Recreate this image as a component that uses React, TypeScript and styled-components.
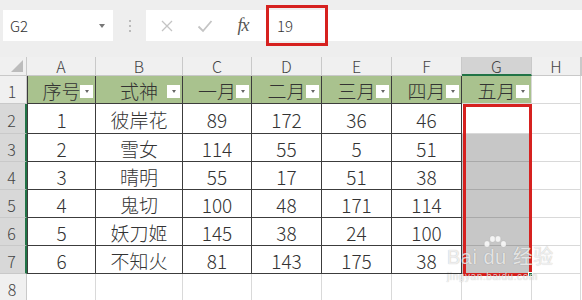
import { Fragment } from 'react'
import styled, { createGlobalStyle, css } from 'styled-components'

const GlobalStyle = createGlobalStyle`
  html, body {
    margin: 0;
    padding: 0;
    background: #fff;
    overflow: hidden;
  }
  * {
    box-sizing: border-box;
  }
`

const FONT = `"Noto Sans CJK SC", "Noto Sans", sans-serif`
const GREEN = '#a9c28e'
const DARK = '#3c3c3c'
const LIGHT = '#d9d9d9'
const HEAD_LINE = '#c9c9c9'
const RED = '#d6211f'
const EXCEL = '#217346'

const headers = ['序号', '式神', '一月', '二月', '三月', '四月', '五月']
const letters = ['A', 'B', 'C', 'D', 'E', 'F', 'G', 'H']
const rows: (string | number)[][] = [
  [1, '彼岸花', 89, 172, 36, 46],
  [2, '雪女', 114, 55, 5, 51],
  [3, '晴明', 55, 17, 51, 38],
  [4, '鬼切', 100, 48, 171, 114],
  [5, '妖刀姬', 145, 38, 24, 100],
  [6, '不知火', 81, 143, 175, 38],
]

const Page = styled.div`
  width: 582px;
  height: 300px;
  overflow: hidden;
  font-family: ${FONT};
  color: #333;
`

const Toolbar = styled.div`
  display: flex;
  align-items: flex-start;
  height: 57px;
  padding: 10px 0 0 3px;
  background: #eeeeee;
`

const NameBox = styled.div`
  width: 110px;
  height: 31px;
  background: #fff;
  display: flex;
  align-items: center;
  justify-content: space-between;
  padding: 0 8px 0 7px;
  font-size: 15px;
  font-weight: 300;
  color: #333;
`

const Caret = styled.span`
  width: 0;
  height: 0;
  border-left: 3px solid transparent;
  border-right: 3px solid transparent;
  border-top: 4px solid #777;
`

const Grip = styled.div`
  width: 33px;
  height: 31px;
  display: flex;
  align-items: center;
  justify-content: center;
`

const FormulaBar = styled.div`
  flex: 1;
  height: 31px;
  background: #fff;
  display: flex;
  align-items: center;
  padding-left: 2px;
`

const IconButton = styled.div`
  width: 38px;
  height: 31px;
  display: flex;
  align-items: center;
  justify-content: center;
`

const FxLabel = styled.span`
  font-family: 'Liberation Serif', serif;
  font-style: italic;
  font-size: 18px;
  color: #555;
  letter-spacing: -1px;
`

const ValueBox = styled.div`
  align-self: center;
  margin-left: 4px;
  width: 62px;
  height: 41px;
  border: 3px solid ${RED};
  display: flex;
  align-items: center;
  padding-left: 8px;
  font-size: 15px;
  font-weight: 300;
  color: #333;
`

const Sheet = styled.div`
  position: relative;
  display: grid;
  grid-template-columns: 27px 69px 87px 69px 70px 70px 70px 70px 1fr;
  grid-template-rows: 19px 28px 30px 28px 28px 28px 28px 28px 1fr;
  height: 243px;
`

type Place = { $col: number; $row: number | string }

const placed = css<Place>`
  grid-column: ${(p) => p.$col};
  grid-row: ${(p) => p.$row};
`

const Corner = styled.div<Place>`
  ${placed};
  background: #f0f0f0;
  border-right: 1px solid ${HEAD_LINE};
  border-bottom: 1px solid ${HEAD_LINE};
  display: flex;
  align-items: flex-end;
  justify-content: flex-end;
  padding: 0 3px 3px 0;
`

const ColHead = styled.div<Place & { $active?: boolean }>`
  ${placed};
  display: flex;
  align-items: center;
  justify-content: center;
  font-size: 16px;
  font-weight: 300;
  color: #444;
  background: ${(p) => (p.$active ? '#d3d3d3' : '#f0f0f0')};
  border-right: 1px solid ${HEAD_LINE};
  border-bottom: ${(p) => (p.$active ? `2px solid ${EXCEL}` : `1px solid ${HEAD_LINE}`)};
`

const RowHead = styled.div<Place & { $active?: boolean }>`
  ${placed};
  display: flex;
  align-items: center;
  justify-content: center;
  padding: 3px 2px 0 0;
  font-size: 16px;
  font-weight: 300;
  color: #444;
  background: ${(p) => (p.$active ? '#d8d8d8' : '#f0f0f0')};
  border-bottom: 1px solid ${HEAD_LINE};
  border-right: ${(p) => (p.$active ? `2px solid ${EXCEL}` : `1px solid ${HEAD_LINE}`)};
`

type Tone = 'green' | 'white' | 'gray' | 'empty'

const toneBg: Record<Tone, string> = {
  green: GREEN,
  white: '#fff',
  gray: '#c7c7c7',
  empty: '#fff',
}

const Cell = styled.div<Place & { $tone: Tone; $table?: boolean; $edge?: boolean }>`
  ${placed};
  position: relative;
  display: flex;
  align-items: center;
  justify-content: center;
  padding-top: 2px;
  font-size: 19px;
  font-weight: 300;
  line-height: 1;
  color: #333;
  background: ${(p) => toneBg[p.$tone]};
  border-right: 1px solid ${(p) => (p.$table ? DARK : p.$tone === 'gray' ? '#b5b5b5' : LIGHT)};
  border-bottom: 1px solid ${(p) => (p.$table ? DARK : p.$tone === 'gray' ? '#a9a9a9' : LIGHT)};
  ${(p) => p.$edge && `border-left: 1px solid ${DARK};`}
`

const FilterButton = styled.span`
  position: absolute;
  right: 2px;
  bottom: 5px;
  width: 13px;
  height: 13px;
  background: #fff;
  display: flex;
  align-items: center;
  justify-content: center;

  &::after {
    content: '';
    border-left: 2.5px solid transparent;
    border-right: 2.5px solid transparent;
    border-top: 3px solid #666;
  }
`

const Selection = styled.div<Place>`
  ${placed};
  position: relative;
  z-index: 2;
  margin: 0 0 -2px 1px;
  border: 3px solid ${RED};
  pointer-events: none;
`

const FillHandle = styled.span`
  position: absolute;
  right: -4px;
  bottom: -4px;
  width: 5px;
  height: 5px;
  background: ${EXCEL};
  border: 1px solid #fff;
`

const Watermark = styled.div`
  position: absolute;
  left: 447px;
  top: 178px;
  z-index: 3;
  display: flex;
  flex-direction: column;
  align-items: flex-start;
  pointer-events: none;
  white-space: nowrap;
  color: rgba(255, 255, 255, 0.75);
  text-shadow: 0 0 1px rgba(0, 0, 0, 0.3);
`

const Paw = styled.svg`
  margin-left: 36px;
  margin-bottom: -3px;
`

const MarkTitle = styled.span`
  font-family: 'Liberation Sans', ${FONT};
  font-size: 20px;
  line-height: 20px;
  letter-spacing: 0.5px;
`

const MarkUrl = styled.span`
  margin-top: 4px;
  font-family: 'Liberation Sans', sans-serif;
  font-size: 10px;
  letter-spacing: 0.6px;
`

const App = () => {
  return (
    <Page>
      <GlobalStyle />
      <Toolbar>
        <NameBox>
          <span>G2</span>
          <Caret />
        </NameBox>
        <Grip>
          <svg width="4" height="16" viewBox="0 0 4 16">
            <circle cx="2" cy="3" r="1" fill="#aaa" />
            <circle cx="2" cy="8" r="1" fill="#aaa" />
            <circle cx="2" cy="13" r="1" fill="#aaa" />
          </svg>
        </Grip>
        <FormulaBar>
          <IconButton>
            <svg width="14" height="14" viewBox="0 0 14 14">
              <path d="M2 2 L12 12 M12 2 L2 12" stroke="#c4c4c4" strokeWidth="1.3" />
            </svg>
          </IconButton>
          <IconButton>
            <svg width="16" height="14" viewBox="0 0 16 14">
              <path d="M1.5 7.5 L6 12 L14.5 2" stroke="#c4c4c4" strokeWidth="1.8" fill="none" />
            </svg>
          </IconButton>
          <IconButton>
            <FxLabel>fx</FxLabel>
          </IconButton>
          <ValueBox>19</ValueBox>
        </FormulaBar>
      </Toolbar>

      <Sheet>
        <Corner $col={1} $row={1}>
          <svg width="12" height="12" viewBox="0 0 12 12">
            <polygon points="12,0 12,12 0,12" fill="#bcbcbc" />
          </svg>
        </Corner>
        {letters.map((l, i) => (
          <ColHead key={l} $col={i + 2} $row={1} $active={l === 'G'}>
            {l}
          </ColHead>
        ))}
        <ColHead $col={10} $row={1} />

        {Array.from({ length: 8 }, (_, r) => (
          <RowHead key={r} $col={1} $row={r + 2} $active={r >= 1 && r <= 6}>
            {r + 1}
          </RowHead>
        ))}

        {headers.map((h, c) => (
          <Cell key={h} $col={c + 2} $row={2} $tone="green" $table={c < 6} $edge={c === 0}>
            {h}
            <FilterButton />
          </Cell>
        ))}
        <Cell $col={9} $row={2} $tone="empty" />

        {rows.map((row, r) => (
          <Fragment key={r}>
            {row.map((v, c) => (
              <Cell key={c} $col={c + 2} $row={r + 3} $tone="white" $table $edge={c === 0}>
                {v}
              </Cell>
            ))}
            <Cell $col={8} $row={r + 3} $tone={r === 0 ? 'white' : 'gray'} />
            <Cell $col={9} $row={r + 3} $tone="empty" />
          </Fragment>
        ))}

        {Array.from({ length: 8 }, (_, c) => (
          <Cell key={c} $col={c + 2} $row={9} $tone="empty" />
        ))}

        <Selection $col={8} $row="3 / 9">
          <FillHandle />
        </Selection>

        <Watermark>
          <Paw width="24" height="15" viewBox="0 0 24 15">
            <g fill="rgba(255,255,255,0.8)" stroke="rgba(0,0,0,0.15)" strokeWidth="0.6">
              <ellipse cx="4" cy="9" rx="2.8" ry="3.2" />
              <ellipse cx="9.5" cy="4" rx="2.8" ry="3.2" />
              <ellipse cx="15" cy="4" rx="2.8" ry="3.2" />
              <ellipse cx="20.5" cy="9" rx="2.8" ry="3.2" />
            </g>
          </Paw>
          <MarkTitle>Bai du 经验</MarkTitle>
          <MarkUrl>jingyan.baidu.com</MarkUrl>
        </Watermark>
      </Sheet>
    </Page>
  )
}

export default App
